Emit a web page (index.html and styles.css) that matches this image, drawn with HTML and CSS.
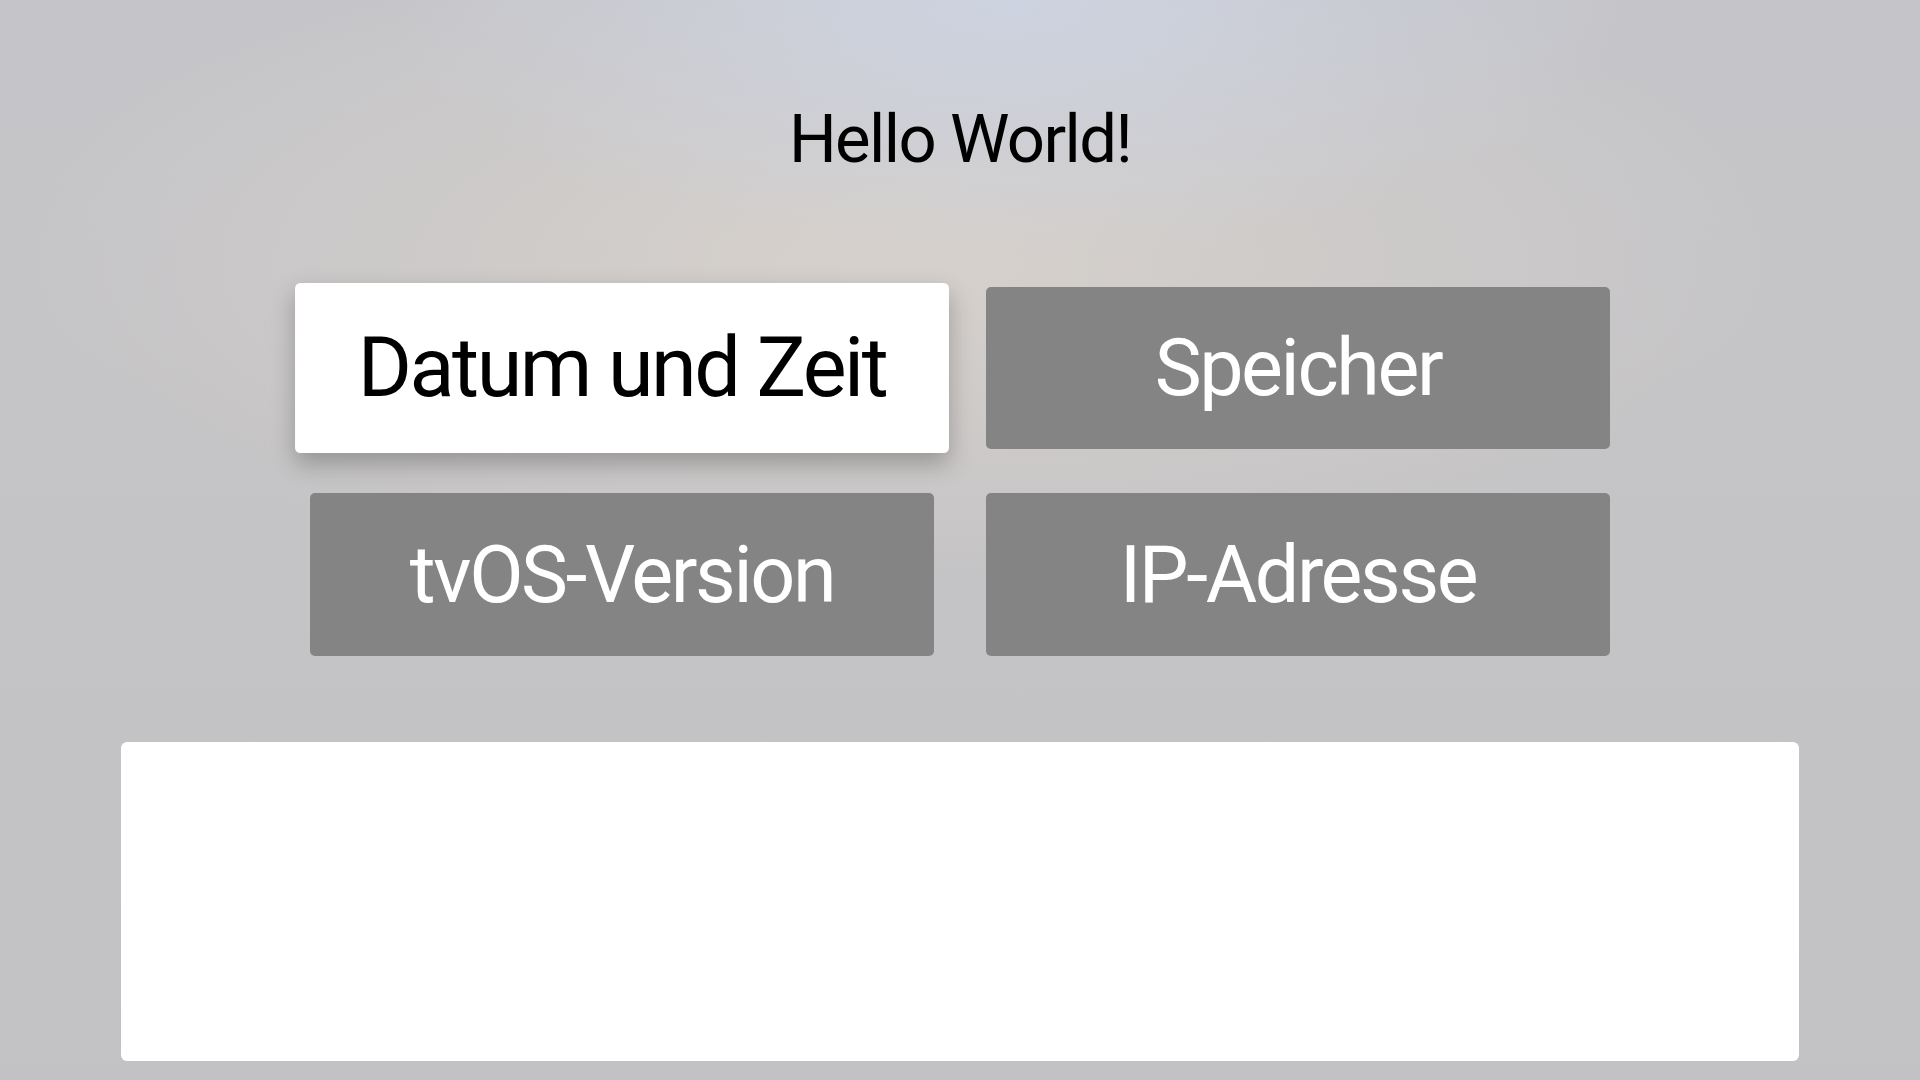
FILE: index.html
```html
<!DOCTYPE html>
<html lang="de">
<head>
<meta charset="utf-8">
<title>Hello World</title>
<link rel="stylesheet" href="styles.css">
</head>
<body>
<main class="screen">
  <h1 class="title">Hello World!</h1>
  <div class="grid">
    <button class="btn focused">Datum und Zeit</button>
    <button class="btn">Speicher</button>
    <button class="btn">tvOS-Version</button>
    <button class="btn">IP-Adresse</button>
  </div>
  <div class="output"></div>
</main>
</body>
</html>
```

FILE: styles.css
```css
html, body {
  margin: 0;
  padding: 0;
}
body {
  width: 1920px;
  height: 1080px;
  overflow: hidden;
  font-family: Roboto, Inter, "Noto Sans", sans-serif;
  background-color: #c4c3c5;
  background-image:
    radial-gradient(ellipse 620px 260px at 1010px 0px, rgba(206, 212, 226, 0.95), rgba(206, 212, 226, 0) 100%),
    radial-gradient(ellipse 900px 330px at 900px 260px, rgba(216, 210, 204, 0.9), rgba(216, 210, 204, 0) 100%),
    linear-gradient(180deg, #c5c5c9 0%, #c5c4c6 40%, #c2c1c3 100%);
}
.screen {
  display: flex;
  flex-direction: column;
  align-items: center;
  height: 1080px;
}
.title {
  margin: 99px 0 0 0;
  font-size: 67px;
  line-height: 80px;
  font-weight: 400;
  color: #000;
  letter-spacing: -1.6px;
}
.grid {
  margin-top: 108px;
  display: grid;
  grid-template-columns: 624px 624px;
  grid-template-rows: 162px 163px;
  column-gap: 52px;
  row-gap: 44px;
}
.btn {
  border: none;
  margin: 0;
  padding: 0;
  border-radius: 5px;
  background: #858484;
  color: #fff;
  font-family: Roboto, Inter, "Noto Sans", sans-serif;
  font-size: 79px;
  font-weight: 400;
  letter-spacing: -2.4px;
  display: flex;
  align-items: center;
  justify-content: center;
}
.btn.focused {
  background: #fff;
  color: #000;
  transform: scale(1.048, 1.05);
  box-shadow: 0 10px 22px rgba(0, 0, 0, 0.25);
}
.output {
  margin-top: 86px;
  width: 1678px;
  height: 319px;
  background: #fff;
  border-radius: 6px;
}
```
